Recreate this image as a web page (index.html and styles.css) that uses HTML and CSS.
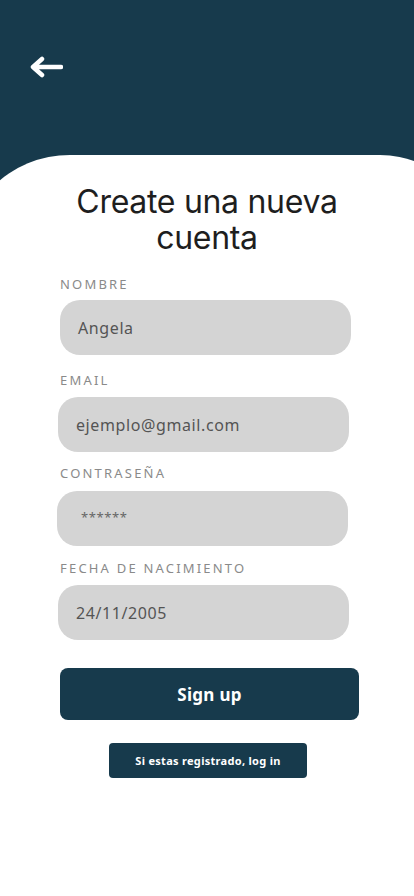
FILE: index.html
```html
<!DOCTYPE html>
<html lang="es">
<head>
<meta charset="utf-8">
<title>Create una nueva cuenta</title>
<link rel="stylesheet" href="styles.css">
</head>
<body>
<div class="screen">
  <header class="top">
    <a class="back" href="#" aria-label="Volver">
      <svg width="34" height="22" viewBox="0 0 34 22"><path d="M32 11H5M13 3L4 11L13 19" fill="none" stroke="#fff" stroke-width="4.5" stroke-linecap="round" stroke-linejoin="round"/></svg>
    </a>
  </header>
  <main class="card">
    <h1 class="title">Create una nueva<br>cuenta</h1>
    <form class="form">
      <div class="field f1">
        <label class="label">NOMBRE</label>
        <div class="input">Angela</div>
      </div>
      <div class="field f2">
        <label class="label">EMAIL</label>
        <div class="input">ejemplo@gmail.com</div>
      </div>
      <div class="field f3">
        <label class="label">CONTRASEÑA</label>
        <div class="input pass">******</div>
      </div>
      <div class="field f4">
        <label class="label">FECHA DE NACIMIENTO</label>
        <div class="input">24/11/2005</div>
      </div>
      <button type="button" class="signup">Sign up</button>
      <button type="button" class="login">Si estas registrado, log in</button>
    </form>
  </main>
</div>
</body>
</html>
```
FILE: styles.css
```css
* { box-sizing: border-box; }
html, body { margin: 0; padding: 0; }
body {
  background: #173a4c;
  font-family: "Inter", "Noto Sans", sans-serif;
  overflow: hidden;
  width: 414px;
  height: 896px;
}
.screen { width: 414px; height: 896px; overflow: hidden; display: flex; flex-direction: column; }
.top { height: 155px; padding: 56px 0 0 29px; flex: none; }
.back { display: inline-block; width: 34px; height: 22px; }
.back svg { display: block; }
.card {
  flex: 1;
  background: #fff;
  margin: 0 -66px 0 -40px;
  border-radius: 110px 100px 0 0;
  padding: 29px 66px 0 40px;
}
.title {
  margin: 0;
  text-align: center;
  font-weight: 400;
  font-size: 32px;
  line-height: 36px;
  color: #1e1e1e;
  letter-spacing: -0.3px;
}
.form { display: flex; flex-direction: column; padding-top: 19px; }
.field { display: flex; flex-direction: column; }
.label {
  font-family: "Noto Sans", sans-serif;
  font-size: 13px;
  letter-spacing: 2.2px;
  color: #8a8a8a;
  line-height: 18px;
  margin-left: 60px;
}
.input {
  width: 291px;
  height: 55px;
  background: #d4d4d4;
  border-radius: 20px;
  margin-top: 7px;
  padding-left: 18px;
  display: flex;
  align-items: center;
  font-family: "Noto Sans", sans-serif;
  font-size: 16px;
  letter-spacing: 0.6px;
  color: #545454;
}
.pass { padding-left: 24px; font-size: 13px; color: #666; padding-bottom: 3px; }
.f1 .input { margin-left: 60px; }
.f2 { margin-top: 16px; }
.f2 .input { margin-left: 58px; margin-top: 8px; }
.f3 { margin-top: 12px; }
.f3 .input { margin-left: 57px; margin-top: 9px; }
.f4 { margin-top: 13px; }
.f4 .input { margin-left: 58px; margin-top: 8px; }
.signup {
  margin: 28px 0 0 60px;
  width: 299px;
  height: 52px;
  border: none;
  border-radius: 8px;
  background: #173a4c;
  color: #fff;
  font-family: "Noto Sans", sans-serif;
  font-weight: 700;
  font-size: 17px;
  letter-spacing: 0.3px;
}
.login {
  margin: 23px 0 0 109px;
  width: 198px;
  height: 35px;
  border: none;
  border-radius: 4px;
  background: #173a4c;
  color: #fff;
  font-family: "Noto Sans", sans-serif;
  font-weight: 700;
  font-size: 11px;
  letter-spacing: 0.3px;
}
```
